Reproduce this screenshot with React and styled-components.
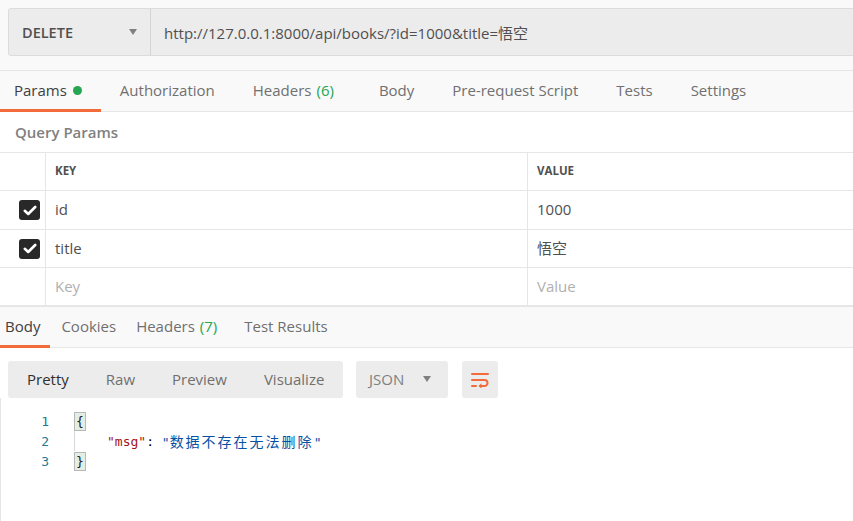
import React from "react";
import styled, { createGlobalStyle } from "styled-components";

const GlobalStyle = createGlobalStyle`
  html, body { margin: 0; padding: 0; background: #fff; }
  body {
    font-family: "Open Sans", "Noto Sans CJK SC", sans-serif;
    color: #505050;
    overflow: hidden;
  }
`;

const Page = styled.div`
  width: 853px;
  height: 521px;
  overflow: hidden;
  display: flex;
  flex-direction: column;
`;

const RequestBar = styled.div`
  background: #f9f9f9;
  padding: 8px 0 14px 8px;
`;

const UrlBox = styled.div`
  display: flex;
  height: 46px;
  width: 860px;
  background: #ececec;
  border: 1px solid #dcdcdc;
  border-radius: 3px;
`;

const Method = styled.div`
  width: 142px;
  display: flex;
  align-items: center;
  justify-content: space-between;
  padding: 0 13px 0 13px;
  box-sizing: border-box;
  border-right: 1px solid #d4d4d4;
  font-size: 14.5px;
  font-weight: 600;
  color: #505050;
`;

const Caret = styled.span`
  width: 0;
  height: 0;
  border-left: 4.5px solid transparent;
  border-right: 4.5px solid transparent;
  border-top: 6px solid ${(p) => p.$color || "#808080"};
`;

const UrlText = styled.div`
  display: flex;
  align-items: center;
  padding-left: 13px;
  font-size: 15px;
  color: #505050;
`;

const TabRow = styled.div`
  display: flex;
  height: 40px;
  background: #f9f9f9;
  border-top: 1px solid #e6e6e6;
  border-bottom: 1px solid #e6e6e6;
`;

const Tab = styled.div`
  position: relative;
  display: flex;
  align-items: center;
  padding: 0 ${(p) => p.$r ?? 19}px 2px ${(p) => p.$l ?? 19}px;
  font-size: 15px;
  color: ${(p) => (p.$active ? "#404040" : "#707070")};
  white-space: nowrap;
  &::after {
    content: "";
    display: ${(p) => (p.$active ? "block" : "none")};
    position: absolute;
    left: 0;
    right: 0;
    bottom: -1px;
    height: 3px;
    background: #f26b3a;
  }
`;

const Count = styled.span`
  color: #26a552;
  margin-left: 5px;
`;

const Dot = styled.span`
  width: 9px;
  height: 9px;
  border-radius: 50%;
  background: #26a552;
  margin-left: 6px;
`;

const SectionTitle = styled.div`
  height: 41px;
  display: flex;
  align-items: center;
  padding: 0 0 1px 15px;
  box-sizing: border-box;
  font-size: 15px;
  font-weight: 600;
  color: #808080;
  border-bottom: 1px solid #e6e6e6;
`;

const Grid = styled.div`
  display: grid;
  grid-template-columns: 46px 482px 1fr;
  grid-template-rows: 38px 39px 38px 38px;
`;

const Cell = styled.div`
  display: flex;
  align-items: center;
  padding-left: ${(p) => (p.$check ? 19 : 9)}px;
  padding-bottom: ${(p) => (p.$check ? 0 : 2)}px;
  border-bottom: 1px solid #e6e6e6;
  border-right: ${(p) => (p.$last ? "none" : "1px solid #e6e6e6")};
  font-size: ${(p) => (p.$head ? "11.5px" : "15px")};
  font-weight: ${(p) => (p.$head ? 700 : 400)};
  color: ${(p) => (p.$placeholder ? "#b0b0b0" : "#505050")};
  box-sizing: border-box;
`;

const Check = styled.span`
  width: 21px;
  height: 20px;
  border-radius: 3px;
  background: #282828;
  display: flex;
  align-items: center;
  justify-content: center;
`;

const Toolbar = styled.div`
  display: flex;
  align-items: center;
  padding: 13px 0 0 8px;
`;

const Segmented = styled.div`
  display: flex;
  align-items: center;
  height: 37px;
  width: 335px;
  padding-left: 0.5px;
  padding-bottom: 1px;
  box-sizing: border-box;
  background: #ececec;
  border-radius: 3px;
`;

const Segment = styled.div`
  padding: 0 18.5px;
  font-size: 15px;
  color: ${(p) => (p.$active ? "#303030" : "#707070")};
`;

const Select = styled.div`
  display: flex;
  align-items: center;
  justify-content: space-between;
  height: 37px;
  width: 92px;
  margin-left: 13px;
  padding: 0 17px 1px 13px;
  box-sizing: border-box;
  background: #ececec;
  border-radius: 3px;
  font-size: 15px;
  color: #808080;
`;

const IconButton = styled.div`
  width: 36px;
  height: 37px;
  margin-left: 14px;
  display: flex;
  align-items: center;
  justify-content: center;
  background: #ececec;
  border-radius: 3px;
`;

const Code = styled.div`
  flex: 1;
  padding-top: 13px;
  border-left: 1px solid #e6e6e6;
  font-family: "DejaVu Sans Mono", "Noto Sans CJK SC", monospace;
  font-size: 13px;
`;

const Line = styled.div`
  display: flex;
  height: 20px;
  align-items: center;
`;

const LineNo = styled.span`
  width: 48px;
  text-align: right;
  color: #237893;
`;

const Gutter = styled.span`
  width: 25px;
`;

const Brace = styled.span`
  display: inline-block;
  border: 1px solid #b8b8b8;
  background: #e4eee4;
  color: #222;
  line-height: 17px;
  padding: 0 1px;
`;

const Indent = styled.span`
  display: inline-block;
  width: 32px;
  height: 20px;
  border-left: 1px solid #d8d8d8;
`;

const Key = styled.span`
  color: #a31515;
`;

const Str = styled.span`
  color: #0451a5;
`;

const Wide = styled.span`
  font-size: 14px;
  letter-spacing: 2px;
`;

const Punct = styled.span`
  color: #000;
`;

const Tick = () => (
  <svg width="14" height="11" viewBox="0 0 14 11">
    <path d="M1.8 5.8 L5.2 9 L12.2 2" fill="none" stroke="#fff" strokeWidth="2.6" strokeLinecap="round" strokeLinejoin="round" />
  </svg>
);

const WrapIcon = () => (
  <svg width="20" height="16" viewBox="0 0 20 16">
    <g fill="none" stroke="#f26b3a" strokeWidth="2" strokeLinecap="round">
      <path d="M2 2 H18" />
      <path d="M2 8 H14.5 a3 3 0 0 1 0 6 H10" />
      <path d="M2 14 H6" />
    </g>
    <path d="M8.5 14 L11.5 11.3 L11.5 16.7 Z" fill="#f26b3a" />
  </svg>
);

const params = [
  { key: "id", value: "1000" },
  { key: "title", value: "悟空" },
];

export default function App() {
  return (
    <Page>
      <GlobalStyle />
      <RequestBar>
        <UrlBox>
          <Method>
            DELETE
            <Caret />
          </Method>
          <UrlText>http://127.0.0.1:8000/api/books/?id=1000&amp;title=悟空</UrlText>
        </UrlBox>
      </RequestBar>

      <TabRow>
        <Tab $active $l={14}>
          Params<Dot />
        </Tab>
        <Tab>Authorization</Tab>
        <Tab>Headers<Count>(6)</Count></Tab>
        <Tab $l={26}>Body</Tab>
        <Tab>Pre-request Script</Tab>
        <Tab>Tests</Tab>
        <Tab>Settings</Tab>
      </TabRow>

      <SectionTitle>Query Params</SectionTitle>

      <Grid>
        <Cell $check />
        <Cell $head>KEY</Cell>
        <Cell $head $last>VALUE</Cell>
        {params.map((p) => (
          <React.Fragment key={p.key}>
            <Cell $check>
              <Check>
                <Tick />
              </Check>
            </Cell>
            <Cell>{p.key}</Cell>
            <Cell $last>{p.value}</Cell>
          </React.Fragment>
        ))}
        <Cell $check />
        <Cell $placeholder>Key</Cell>
        <Cell $placeholder $last>Value</Cell>
      </Grid>

      <TabRow>
        <Tab $active $l={5} $r={10}>Body</Tab>
        <Tab $l={11} $r={10}>Cookies</Tab>
        <Tab $l={10} $r={10}>Headers<Count>(7)</Count></Tab>
        <Tab $l={17}>Test Results</Tab>
      </TabRow>

      <Toolbar>
        <Segmented>
          <Segment $active>Pretty</Segment>
          <Segment>Raw</Segment>
          <Segment>Preview</Segment>
          <Segment>Visualize</Segment>
        </Segmented>
        <Select>
          JSON
          <Caret />
        </Select>
        <IconButton>
          <WrapIcon />
        </IconButton>
      </Toolbar>

      <Code>
        <Line>
          <LineNo>1</LineNo>
          <Gutter />
          <Brace>{"{"}</Brace>
        </Line>
        <Line>
          <LineNo>2</LineNo>
          <Gutter />
          <Indent />
          <Key>"msg"</Key>
          <Punct>:&nbsp;</Punct>
          <Str>
            "<Wide>数据不存在无法删除</Wide>"
          </Str>
        </Line>
        <Line>
          <LineNo>3</LineNo>
          <Gutter />
          <Brace>{"}"}</Brace>
        </Line>
      </Code>
    </Page>
  );
}
